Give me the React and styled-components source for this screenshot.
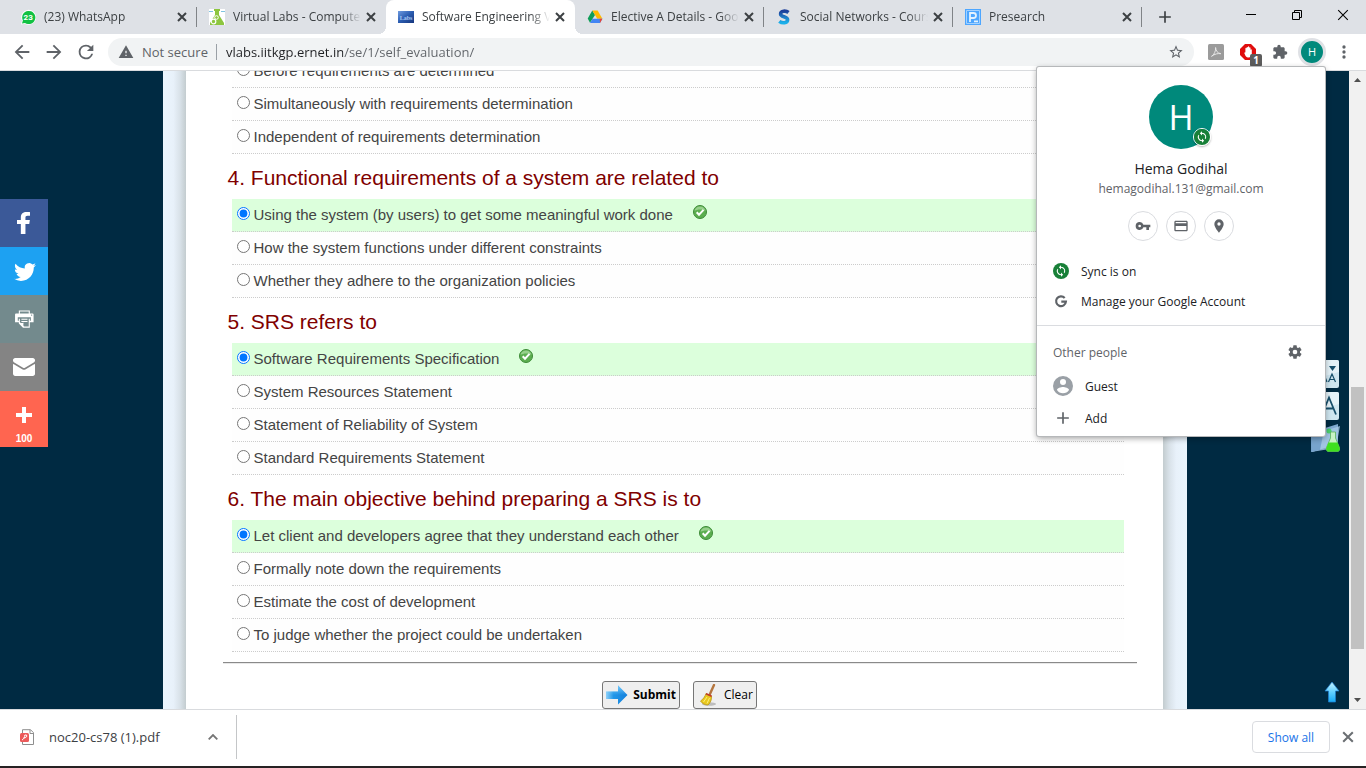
import React from 'react';
import styled, { createGlobalStyle, css } from 'styled-components';

const UI = `"Open Sans", "Noto Sans", sans-serif`;
const ARIAL = `"Liberation Sans", Arial, sans-serif`;

const Global = createGlobalStyle`
  *, *::before, *::after { box-sizing: border-box; }
  html, body { margin: 0; padding: 0; }
  body { font-family: ${UI}; font-size: 12px; color: #3c4043; }
  button { font: inherit; color: inherit; border: 0; padding: 0; background: none; cursor: pointer; }
  a { color: inherit; text-decoration: none; }
  svg { display: block; flex: none; }
  h1, h2, p, ul, fieldset { margin: 0; padding: 0; border: 0; font-weight: normal; }
`;

const Browser = styled.div`
  position: relative;
  display: flex;
  flex-direction: column;
  height: 100vh;
  overflow: hidden;
  background: #fff;
`;

/* ---------- tab strip ---------- */
const TabStrip = styled.header`
  flex: none;
  display: flex;
  height: 34px;
  padding-left: 8px;
  background: #dee1e6;
`;
const Tab = styled.div`
  position: relative;
  display: flex;
  align-items: center;
  flex: 0 1 189px;
  min-width: 0;
  padding: 0 7px 0 12px;
  color: #3c4043;
  ${(p) => p.$divider && css`
    &::after {
      content: '';
      position: absolute;
      right: 0;
      top: 7px;
      width: 1px;
      height: 20px;
      background: #808387;
    }
  `}
  ${(p) => p.$active && css`
    background: #fff;
    border-radius: 8px 8px 0 0;
    &::before, &::after {
      content: '';
      position: absolute;
      bottom: 0;
      width: 8px;
      height: 8px;
    }
    &::before { left: -8px; background: radial-gradient(circle at 0 0, transparent 8px, #fff 8px); }
    &::after { right: -8px; background: radial-gradient(circle at 100% 0, transparent 8px, #fff 8px); }
  `}
`;
const TabTitle = styled.span`
  flex: 1;
  min-width: 0;
  margin: 0 2px 0 8px;
  overflow: hidden;
  white-space: nowrap;
  line-height: 20px;
  mask-image: linear-gradient(to left, transparent 0, #000 20px);
`;
const IconButton = styled.button`
  display: flex;
  align-items: center;
  justify-content: center;
  flex: none;
  width: ${(p) => p.$size || 16}px;
  height: ${(p) => p.$size || 16}px;
  color: ${(p) => p.$color || '#3c4043'};
`;
const NewTab = styled(IconButton)`
  align-self: center;
  margin-left: 15px;
`;
const WindowControls = styled.div`
  display: flex;
  margin-left: auto;
`;
const WindowButton = styled.button`
  display: flex;
  align-items: center;
  justify-content: center;
  width: 46px;
  height: 30px;
  color: #000;
`;

/* ---------- toolbar ---------- */
const Toolbar = styled.div`
  flex: none;
  display: flex;
  align-items: center;
  height: 37px;
  padding: 0 10px 0 10px;
  border-bottom: 1px solid #d9dbde;
  background: #fff;
`;
const NavButtons = styled.nav`
  display: flex;
  gap: 8px;
  margin-right: 10px;
`;
const Omnibox = styled.div`
  flex: 1;
  display: flex;
  align-items: center;
  min-width: 0;
  height: 28px;
  padding: 0 10px;
  border-radius: 14px;
  background: #f1f3f4;
`;
const Security = styled.span`
  display: flex;
  align-items: center;
  gap: 8px;
  padding-right: 8px;
  margin-right: 9px;
  border-right: 1px solid #9aa0a6;
  font-size: 13px;
  line-height: 16px;
  color: #5f6368;
  white-space: nowrap;
`;
/* The host is darker than the path. */
const Address = styled.input`
  flex: 1;
  min-width: 0;
  border: 0;
  padding: 0;
  outline: 0;
  font: 13px/20px ${UI};
  color: transparent;
  caret-color: #202124;
  background: linear-gradient(to right, #202124 117px, #5f6368 117px);
  background-clip: text;
`;
const Extensions = styled.div`
  display: flex;
  align-items: center;
  gap: 8px;
  margin-left: 10px;
`;
const ExtensionSlot = styled.div`
  position: relative;
`;
const Badge = styled.span`
  position: absolute;
  right: -2px;
  bottom: -3px;
  width: 12px;
  height: 13px;
  border-radius: 2px;
  background: #5c5c5c;
  color: #fff;
  font: bold 10px/13px ${UI};
  text-align: center;
`;
const ToolbarAvatar = styled.button`
  width: 28px;
  height: 28px;
  margin: 0 -2px;
  border-radius: 50%;
  border: 3px solid #dfe1e5;
  background: #00897b;
  color: #fff;
  font: 11px/22px ${UI};
`;

/* ---------- viewport ---------- */
const Viewport = styled.div`
  flex: 1;
  min-height: 0;
  display: flex;
  position: relative;
`;
const Page = styled.div`
  position: relative;
  flex: 1;
  min-width: 0;
  overflow: hidden;
  background: #002a42;
  font-family: ${ARIAL};
`;
const Frame = styled.div`
  display: grid;
  grid-template-columns: 23px 1fr 24px;
  max-width: 1024px;
  min-height: 100%;
  margin: 0 auto;
`;
const Edge = styled.div`
  background: linear-gradient(to ${(p) => p.$to}, #ebf5fd 0, #e8f1fa 45%, #d8e1e8 75%, #c3cccf 100%);
`;
const Content = styled.form`
  margin-top: -16px;
  padding: 0 26px 0 37px;
  background: #fff;
`;
const Question = styled.fieldset`
  min-width: 0;
`;
const QuestionTitle = styled.legend`
  padding: 0 0 0 5px;
  width: 100%;
  height: 45px;
  font-size: 21px;
  line-height: 47px;
  color: #800000;
`;
const Choice = styled.label`
  display: flex;
  align-items: center;
  height: 33px;
  margin: 0 13px 0 9px;
  border-bottom: 1px dotted #ccc;
  background: ${(p) => (p.$correct ? '#dcffdc' : '#fefefe')};
  font-size: 15px;
  line-height: 32px;
  color: #444;
`;
const Radio = styled.input`
  flex: none;
  width: 13px;
  height: 13px;
  margin: 0 4px 3px 5px;
`;
const Tick = styled.svg`
  margin: 0 0 6px 20px;
`;
const Rule = styled.hr`
  height: 2px;
  margin: 10px 0 17px;
  border: 0;
  border-top: 1px solid #8a8a8a;
  border-bottom: 1px solid #e8e8e8;
`;
const Actions = styled.div`
  display: flex;
  justify-content: center;
  gap: 13px;
`;
const ActionButton = styled.button`
  display: flex;
  align-items: center;
  gap: 5px;
  height: 28px;
  padding: 0 3px;
  border: 1px solid #767676;
  border-radius: 3px;
  background: #efefef;
  color: #000;
  font: ${(p) => (p.$primary ? 'bold' : 'normal')} 12px/24px ${UI};
`;

const ShareBar = styled.nav`
  position: absolute;
  left: 0;
  top: 128px;
  width: 48px;
`;
const ShareLink = styled.a`
  display: flex;
  flex-direction: column;
  align-items: center;
  padding: 8px 0;
  background: ${(p) => p.$bg};
  color: #fff;
  font: bold 10px/16px ${ARIAL};
  ${(p) => p.$counted && css`padding-bottom: 0;`}
`;
const Tools = styled.div`
  position: absolute;
  right: 10px;
  top: 289px;
  display: flex;
  flex-direction: column;
  gap: 4px;
`;
const ToTop = styled.a`
  position: absolute;
  right: 9px;
  bottom: 6px;
`;

const Scrollbar = styled.div`
  flex: none;
  display: flex;
  flex-direction: column;
  justify-content: space-between;
  align-items: center;
  width: 17px;
  padding: 7px 0;
  background: #f1f1f1;
`;
const Thumb = styled.div`
  width: 13px;
  height: 262px;
  margin-top: 256px;
  background: #c1c1c1;
`;

/* ---------- profile menu ---------- */
const Profile = styled.section`
  position: absolute;
  top: 67px;
  right: 41px;
  width: 288px;
  padding: 18px 0 2px;
  background: #fff;
  border-radius: 2px;
  box-shadow: 0 0 0 1px #b6b8ba, 0 2px 6px rgba(0, 0, 0, 0.4);
  color: #202124;
`;
const Person = styled.div`
  display: flex;
  flex-direction: column;
  align-items: center;
`;
const BigAvatar = styled.div`
  position: relative;
  width: 64px;
  height: 64px;
  border-radius: 50%;
  background: #00897b;
  color: #fff;
  font: 34px/64px ${UI};
  text-align: center;
`;
const SyncBadge = styled.span`
  position: absolute;
  right: 2px;
  bottom: 3px;
  border: 1px solid #fff;
  border-radius: 50%;
  box-shadow: 0 1px 2px rgba(0, 0, 0, 0.3);
`;
const PersonName = styled.h2`
  margin-top: 10px;
  font-size: 14px;
  line-height: 20px;
`;
const PersonMail = styled.p`
  font-size: 12px;
  line-height: 20px;
  color: #5f6368;
`;
const Shortcuts = styled.div`
  display: flex;
  gap: 8px;
  margin: 12px 0 15px;
`;
const Shortcut = styled(IconButton)`
  border: 1px solid #dadce0;
  border-radius: 50%;
`;
const MenuRow = styled.button`
  display: flex;
  align-items: center;
  gap: 12px;
  width: 100%;
  height: ${(p) => p.$height}px;
  padding: 0 16px;
  font-size: 12px;
  text-align: left;
`;
const MenuDivider = styled.hr`
  margin: 9px 0 8px;
  border: 0;
  border-top: 1px solid #dadce0;
`;
const MenuHeading = styled.div`
  display: flex;
  align-items: center;
  justify-content: space-between;
  height: 36px;
  padding: 0 22px 0 16px;
  color: #5f6368;
`;

/* ---------- downloads ---------- */
const Downloads = styled.footer`
  flex: none;
  display: flex;
  align-items: center;
  height: 59px;
  padding: 0 10px 2px 0;
  border-top: 1px solid #d9dbde;
  border-bottom: 2px solid #262223;
  background: #fff;
`;
const DownloadItem = styled.div`
  display: flex;
  align-items: center;
  width: 237px;
  height: 44px;
  padding: 0 15px 0 19px;
  border-right: 1px solid #c4c6c8;
  font-size: 13px;
`;
const DownloadName = styled.a`
  flex: 1;
  margin-left: 14px;
`;
const ShowAll = styled.button`
  margin-left: auto;
  margin-right: 10px;
  width: 78px;
  height: 32px;
  border: 1px solid #dadce0;
  border-radius: 4px;
  color: #1a73e8;
`;

/* ---------- icons ---------- */
const Cross = ({ size = 10, width = 2 }) => (
  <svg width={size} height={size} viewBox="0 0 10 10" stroke="currentColor" strokeWidth={width}>
    <path d="M1 1l8 8M9 1l-8 8" />
  </svg>
);
const Glyph = ({ d, size = 16, color = '#5f6368', view = '0 0 24 24' }) => (
  <svg width={size} height={size} viewBox={view} fill={color}>
    <path d={d} />
  </svg>
);
const P = {
  back: 'M20 11H7.83l5.59-5.59L12 4l-8 8 8 8 1.41-1.41L7.83 13H20v-2z',
  forward: 'M12 4l-1.41 1.41L16.17 11H4v2h12.17l-5.58 5.59L12 20l8-8z',
  reload: 'M17.65 6.35A7.96 7.96 0 0 0 12 4a8 8 0 1 0 7.73 10h-2.08A6 6 0 1 1 12 6c1.66 0 3.14.69 4.22 1.78L13 11h7V4l-2.35 2.35z',
  warning: 'M1 21h22L12 2 1 21zm12-3h-2v-2h2v2zm0-4h-2v-4h2v4z',
  star: 'M22 9.24l-7.19-.62L12 2 9.19 8.63 2 9.24l5.46 4.73L5.82 21 12 17.27 18.18 21l-1.63-7.03L22 9.24zM12 15.4l-3.76 2.27 1-4.28-3.32-2.88 4.38-.38L12 6.1l1.71 4.04 4.38.38-3.32 2.88 1 4.28L12 15.4z',
  puzzle: 'M20.5 11H19V7c0-1.1-.9-2-2-2h-4V3.5a2.500 2.500 0 0 0-5 0V5H4c-1.1 0-1.990.9-1.990 2v3.800H3.500a2.700 2.700 0 0 1 0 5.400H2V20c0 1.100.9 2 2 2h3.800v-1.500a2.700 2.700 0 0 1 5.400 0V22H17c1.100 0 2-.9 2-2v-4h1.500a2.500 2.500 0 0 0 0-5z',
  dots: 'M12 8a2 2 0 1 0 0-4 2 2 0 0 0 0 4zm0 2a2 2 0 1 0 0 4 2 2 0 0 0 0-4zm0 6a2 2 0 1 0 0 4 2 2 0 0 0 0-4z',
  key: 'M12.65 10A5.99 5.99 0 0 0 1 12a5.99 5.99 0 0 0 11.65 2H17v4h4v-4h2v-4H12.65zM7 14a2 2 0 1 1 0-4 2 2 0 0 1 0 4z',
  card: 'M20 4H4c-1.11 0-1.99.89-1.99 2L2 18c0 1.11.89 2 2 2h16c1.11 0 2-.89 2-2V6c0-1.11-.89-2-2-2zm0 14H4v-6h16v6zm0-10H4V6h16v2z',
  pin: 'M12 2a7 7 0 0 0-7 7c0 5.25 7 13 7 13s7-7.75 7-13a7 7 0 0 0-7-7zm0 9.5a2.5 2.5 0 1 1 0-5 2.5 2.5 0 0 1 0 5z',
  gear: 'M19.43 12.98c.04-.32.07-.64.07-.98s-.03-.66-.07-.98l2.11-1.65c.19-.15.24-.42.12-.64l-2-3.46c-.12-.22-.39-.3-.61-.22l-2.49 1c-.52-.4-1.08-.73-1.69-.98l-.38-2.65A.49.49 0 0 0 14 2h-4c-.25 0-.46.18-.49.42l-.38 2.65c-.61.25-1.17.59-1.69.98l-2.49-1c-.23-.09-.49 0-.61.22l-2 3.46c-.13.22-.07.49.12.64l2.11 1.65c-.04.32-.07.65-.07.98s.03.66.07.98l-2.11 1.65c-.19.15-.24.42-.12.64l2 3.46c.12.22.39.3.61.22l2.49-1c.52.4 1.08.73 1.69.98l.38 2.65c.03.24.24.42.49.42h4c.25 0 .46-.18.49-.42l.38-2.65c.61-.25 1.17-.59 1.69-.98l2.49 1c.23.09.49 0 .61-.22l2-3.46c.12-.22.07-.49-.12-.64l-2.11-1.65zM12 15.5a3.5 3.5 0 1 1 0-7 3.5 3.5 0 0 1 0 7z',
  person: 'M12 2a10 10 0 1 0 0 20 10 10 0 0 0 0-20zm0 3a3 3 0 1 1 0 6 3 3 0 0 1 0-6zm0 14.2a7.2 7.2 0 0 1-6-3.22c.03-1.99 4-3.08 6-3.08 1.99 0 5.97 1.09 6 3.08a7.2 7.2 0 0 1-6 3.22z',
  plus: 'M19 13h-6v6h-2v-6H5v-2h6V5h2v6h6v2z',
  sync: 'M12 4V1L8 5l4 4V6a6 6 0 0 1 5.25 8.9l1.46 1.46A8 8 0 0 0 12 4zm0 14a6 6 0 0 1-5.24-8.9L5.3 7.64A8 8 0 0 0 12 20v3l4-4-4-4v3z',
  facebook: 'M22 5.16c-.406-.054-1.806-.16-3.43-.16-3.4 0-5.733 1.825-5.733 5.17v2.882H9v3.913h3.837V27h4.604V16.965h3.823l.587-3.913h-4.41v-2.5c0-1.123.347-1.903 2.198-1.903H22V5.16z',
  twitter: 'M27.996 10.116c-.81.36-1.68.602-2.592.71a4.526 4.526 0 0 0 1.984-2.496 9.037 9.037 0 0 1-2.866 1.095 4.513 4.513 0 0 0-7.69 4.116 12.81 12.81 0 0 1-9.3-4.715 4.49 4.49 0 0 0-.612 2.27 4.51 4.51 0 0 0 2.008 3.755 4.495 4.495 0 0 1-2.044-.564v.057a4.515 4.515 0 0 0 3.62 4.425 4.52 4.52 0 0 1-2.04.077 4.517 4.517 0 0 0 4.217 3.134 9.055 9.055 0 0 1-5.604 1.93A9.18 9.18 0 0 1 6 23.85a12.773 12.773 0 0 0 6.918 2.027c8.3 0 12.84-6.876 12.84-12.84 0-.195-.005-.39-.014-.583a9.172 9.172 0 0 0 2.252-2.336',
  print: 'M24.67 10.62h-2.86V7.49H10.82v3.12H7.95c-.5 0-.9.4-.9.9v7.66h3.77v1.31L15 24.66h6.81v-5.44h3.77v-7.7c-.01-.5-.41-.9-.91-.9zM11.88 8.56h8.86v2.06h-8.86V8.56zm10.98 9.18h-1.05v-2.1h-1.06v7.96H16.4c-1.58 0-.82-3.74-.82-3.74s-3.65.89-3.69-.78v-3.43h-1.06v2.06H9.77v-3.58h13.09v3.61zm.75-4.91c-.4 0-.72-.32-.72-.72 0-.4.32-.72.72-.72.4 0 .72.32.72.72 0 .4-.32.72-.72.72zm-4.12 2.96h-6.1v1.06h6.1v-1.06zm-6.11 3.15h6.1v-1.06h-6.1v1.06z',
  mail: 'M27 22.757c0 1.24-.988 2.243-2.19 2.243H7.19C5.98 25 5 23.994 5 22.757V13.67c0-.556.39-.773.855-.496l8.78 5.238c.782.467 1.95.467 2.73 0l8.78-5.238c.472-.28.855-.063.855.495v9.087z M27 9.243C27 8.006 26.02 7 24.81 7H7.19C5.988 7 5 8.004 5 9.243v.465c0 .554.385 1.232.857 1.514l9.61 5.733c.267.16.8.16 1.067 0l9.61-5.733c.473-.283.856-.96.856-1.514v-.465z',
  more: 'M18 14V8h-4v6H8v4h6v6h4v-6h6v-4h-6z',
};

const SyncDot = ({ size }) => (
  <svg width={size} height={size} viewBox="0 0 24 24">
    <circle cx="12" cy="12" r="12" fill="#188038" />
    <path d={P.sync} fill="#fff" transform="translate(2.4 2.4) scale(.8)" />
  </svg>
);
const GoogleG = () => (
  <svg width="16" height="16" viewBox="0 0 16 16" fill="none" stroke="#5f6368" strokeWidth="2.200">
    <path d="M11.700 5A4.900 4.900 0 1 0 12.900 8.700H8.300" />
  </svg>
);
const WhatsAppIcon = () => (
  <svg width="16" height="16" viewBox="0 0 16 16">
    <path d="M1 15.5l1-4A7.4 7.4 0 1 1 5 14.700z" fill="#fff" />
    <path d="M2 14.500l.9-3A6.600 6.600 0 1 1 5 13.900z" fill="#12c143" />
    <text x="8.2" y="10.700" fill="#fff" fontSize="8" fontWeight="bold" fontFamily="Roboto, sans-serif" textAnchor="middle">23</text>
  </svg>
);
const FlaskIcon = () => (
  <svg width="16" height="16" viewBox="0 0 16 16">
    <rect width="16" height="16" fill="#fff" />
    <path d="M0 2.500h4M12 2.500h4" stroke="#7fc4e0" />
    <path d="M5 0h6v2h-1v4l5 8v2H1v-2l5-8V2H5z" fill="#8dc63f" />
    <circle cx="7.500" cy="8.500" r="1.800" fill="none" stroke="#fff" />
    <circle cx="4.500" cy="12.500" r="2.300" fill="none" stroke="#fff" strokeWidth="1.200" />
  </svg>
);
const LabsIcon = () => (
  <svg width="16" height="16" viewBox="0 0 16 16">
    <defs>
      <linearGradient id="labs" x1="0" y1="0" x2="1" y2="1">
        <stop offset="0" stopColor="#6f9be0" />
        <stop offset=".5" stopColor="#2a5cb0" />
        <stop offset="1" stopColor="#16357c" />
      </linearGradient>
    </defs>
    <rect y="2" width="16" height="12" fill="url(#labs)" />
    <text x="8" y="10.500" fill="#a9c8f5" fontSize="6" fontWeight="bold" fontFamily="Liberation Serif, serif" textAnchor="middle">Labs</text>
  </svg>
);
const DriveIcon = () => (
  <svg width="16" height="16" viewBox="0 0 16 16">
    <path d="M5.300 1.500L.7 9.500l2.300 4.300L8 5.900z" fill="#0f9d58" />
    <path d="M5.300 1.500h5.300l4.800 8.200h-5.100z" fill="#ffba00" />
    <path d="M5.500 9.700h9.900l-2.400 4.300H3z" fill="#4285f4" />
    <path d="M12.700 9.700h2.700L13 14z" fill="#ea4335" />
  </svg>
);
const SIcon = () => (
  <svg width="16" height="16" viewBox="0 0 16 16" fill="none" strokeWidth="3.600">
    <defs>
      <linearGradient id="swim" x1="0" y1="0" x2="0" y2="1">
        <stop offset="0" stopColor="#1d3f9b" />
        <stop offset=".55" stopColor="#1f7fc8" />
        <stop offset="1" stopColor="#1ab0ea" />
      </linearGradient>
    </defs>
    <path d="M12.500 3.500C10 1.500 4.600 1.600 4.600 4.900c0 3.400 7 2.200 7 5.900 0 3.600-5.400 3.800-8.300 1.500" stroke="url(#swim)" />
  </svg>
);
const PresearchIcon = () => (
  <svg width="16" height="16" viewBox="0 0 16 16" fill="none">
    <rect width="16" height="16" fill="#4da6ff" />
    <path d="M1.500 14.500v-13h13v13z" stroke="#a5d2ff" />
    <path d="M5 13V4h3.500a2.500 2.500 0 0 1 0 5H5M9 12.300h4" stroke="#e4f2ff" strokeWidth="1.800" />
  </svg>
);
const AcrobatIcon = () => (
  <svg width="16" height="16" viewBox="0 0 16 16" fill="none">
    <rect width="16" height="16" rx="1.500" fill="#9b9b9b" />
    <path d="M3.500 12.300C6 11 8 7 7.600 3.500c.2 3.500 2 5.600 5.200 6.200-3-.4-6 .2-9.300 2.600z" stroke="#e8e8e8" />
  </svg>
);
const BlockIcon = () => (
  <svg width="16" height="16" viewBox="0 0 16 16">
    <path d="M5 0h6l5 5v6l-5 5H5l-5-5V5z" fill="#e00d0d" />
    <path d="M4.200 8.700l1.200-.5V4.500c0-.9 1.200-.9 1.200 0V3.600c0-.9 1.300-.9 1.300 0V3c0-.9 1.300-.9 1.300 0v1c0-.9 1.300-.9 1.300 0v2c0-.9 1.300-.9 1.300 0v4c0 2.200-1.300 3.500-3.300 3.500S5.500 12.400 4.200 8.700z" fill="#fff" />
  </svg>
);
const TickIcon = () => (
  <Tick width="14" height="14" viewBox="0 0 14 14" role="img" aria-label="Correct">
    <circle cx="7" cy="7" r="6.500" fill="#5cae50" stroke="#3d8b37" />
    <path d="M1.500 6a5.600 5.600 0 0 1 11 0c-3-2-8-2-11 0z" fill="#96d08b" />
    <path d="M3.700 7.200l2.300 2.500 4.500-4.800" fill="none" stroke="#fff" strokeWidth="2" />
  </Tick>
);
const ArrowIcon = () => (
  <svg width="22" height="22" viewBox="0 0 22 22">
    <defs>
      <linearGradient id="go" x1="0" y1="0" x2="1" y2="0">
        <stop offset="0" stopColor="#8fd0f8" />
        <stop offset=".35" stopColor="#2196e8" />
        <stop offset="1" stopColor="#1580dc" />
      </linearGradient>
      <linearGradient id="shine" x1="0" y1="0" x2="0" y2="1">
        <stop offset="0" stopColor="#7fd2ff" stopOpacity=".9" />
        <stop offset="1" stopColor="#7fd2ff" stopOpacity="0" />
      </linearGradient>
    </defs>
    <path d="M0 7.500h12V1.500l9.500 9.500-9.500 9.500v-5.500H0z" fill="url(#go)" />
    <path d="M0 7.500h12V1.500l9.500 9.500H0z" fill="url(#shine)" />
  </svg>
);
const BroomIcon = () => (
  <svg width="22" height="22" viewBox="-1 0 22 22">
    <ellipse cx="11" cy="20" rx="7" ry="1.700" fill="#bdbdbd" />
    <path d="M16 1l-4.500 10" stroke="#b5763f" strokeWidth="2.400" strokeLinecap="round" />
    <path d="M8 9.500l5.500 2.500c.5 3-1 7-3.500 9-3 0-6-1.500-7.500-4C5 15.500 7 12.500 8 9.500z" fill="#e9c81e" stroke="#b28f12" strokeWidth=".7" />
    <path d="M9 13l-3.500 5M11.500 14L9 19.500" stroke="#fbee7a" />
    <path d="M8 9.800l5.600 2.500" stroke="#c0392b" strokeWidth="1.600" />
  </svg>
);
const FontSizeIcon = ({ large }) => (
  <svg width="28" height="28" viewBox="0 0 28 28" fill="none" stroke="#174f6b">
    <rect width="28" height="28" rx="2" fill="#cfe6f0" stroke="none" />
    <path d="M0 2a2 2 0 0 1 2-2h24a2 2 0 0 1 2 2v10L0 20z" fill="#e4f2f8" stroke="none" />
    {large ? (
      <path d="M11 22.500l7-17 7 17M13.500 16.500h9" strokeWidth="1.800" />
    ) : (
      <>
        <path d="M9 22l3.500-9 3.500 9M10.500 19h4.500M17.500 22l3.500-8 3.500 8M18.500 19.500h5" strokeWidth="1.200" />
        <path d="M18 6h7l-3.500 5z" fill="#174f6b" stroke="none" />
      </>
    )}
  </svg>
);
const FolderIcon = () => (
  <svg width="30" height="31" viewBox="0 0 30 31">
    <path d="M1 8l12-4 2 1 13-4v20L2 29z" fill="#7fa9cf" />
    <path d="M1 12l26-8 3-1-4 22L1 29z" fill="#a9cbe6" opacity=".8" />
    <path d="M1 12v17l9-2L14 7z" fill="#6d9cc8" opacity=".8" />
    <circle cx="19" cy="8" r="2.500" fill="#35d24f" opacity=".8" />
    <path d="M20.500 9h5v6l4 9.500c.8 2.500-.5 4-2.500 4h-8c-2 0-3.300-1.500-2.500-4l4-9.500z" fill="#c9f3c5" stroke="#4fae4a" strokeWidth=".7" />
    <path d="M18.500 19.500h9l2 5c.8 2.500-.5 4-2.500 4h-8c-2 0-3.300-1.500-2.500-4z" fill="#3fe01f" />
  </svg>
);
const UpIcon = () => (
  <svg width="16" height="22" viewBox="0 0 16 22">
    <defs>
      <linearGradient id="up" x1="0" y1="0" x2="0" y2="1">
        <stop offset="0" stopColor="#c8f3ff" />
        <stop offset=".5" stopColor="#63d0ff" />
        <stop offset="1" stopColor="#16a9f5" />
      </linearGradient>
    </defs>
    <path d="M8 1l7 9h-3.500v11h-7V10H1z" fill="url(#up)" stroke="#1f7fd0" strokeWidth=".7" />
  </svg>
);
const PdfIcon = () => (
  <svg width="16" height="17" viewBox="0 0 16 17" fill="none">
    <path d="M3.500 4V.700h8l3 3v11.800h-11V13" stroke="#8e8e8e" />
    <path d="M11 .700V4.500h3.500" stroke="#8e8e8e" />
    <rect x="1" y="4" width="9" height="9" rx="1.500" fill="#ec5a5a" />
    <path d="M3 11c1.500-.5 3-3 2.800-5h1.700c1 1.500-.5 3-3 3" stroke="#fff" />
  </svg>
);

const tabs = [
  { title: '(23) WhatsApp', icon: <WhatsAppIcon />, divider: true },
  { title: 'Virtual Labs - Computer', icon: <FlaskIcon /> },
  { title: 'Software Engineering V', icon: <LabsIcon />, active: true },
  { title: 'Elective A Details - Goo', icon: <DriveIcon />, divider: true },
  { title: 'Social Networks - Cours', icon: <SIcon />, divider: true },
  { title: 'Presearch', icon: <PresearchIcon />, divider: true },
];

const questions = [
  {
    id: 'q3',
    options: ['Before requirements are determined', 'Simultaneously with requirements determination', 'Independent of requirements determination'],
  },
  {
    id: 'q4',
    title: '4. Functional requirements of a system are related to',
    answer: 0,
    options: ['Using the system (by users) to get some meaningful work done', 'How the system functions under different constraints', 'Whether they adhere to the organization policies'],
  },
  {
    id: 'q5',
    title: '5. SRS refers to',
    answer: 0,
    options: ['Software Requirements Specification', 'System Resources Statement', 'Statement of Reliability of System', 'Standard Requirements Statement'],
  },
  {
    id: 'q6',
    title: '6. The main objective behind preparing a SRS is to',
    answer: 0,
    options: ['Let client and developers agree that they understand each other', 'Formally note down the requirements', 'Estimate the cost of development', 'To judge whether the project could be undertaken'],
  },
];

const shares = [
  { name: 'Facebook', bg: '#3b5998', d: P.facebook },
  { name: 'Twitter', bg: '#1da1f2', d: P.twitter },
  { name: 'Print', bg: '#738a8d', d: P.print },
  { name: 'Email', bg: '#848484', d: P.mail },
  { name: 'More', bg: '#ff6550', d: P.more, count: '100' },
];

export default function App() {
  return (
    <Browser>
      <Global />
      <TabStrip>
        {tabs.map((t) => (
          <Tab key={t.title} $active={t.active} $divider={t.divider}>
            {t.icon}
            <TabTitle>{t.title}</TabTitle>
            <IconButton aria-label="Close tab"><Cross /></IconButton>
          </Tab>
        ))}
        <NewTab aria-label="New tab"><Glyph d={P.plus} size={20} color="#3c4043" /></NewTab>
        <WindowControls>
          <WindowButton aria-label="Minimize">
            <svg width="10" height="10" viewBox="0 0 10 10" stroke="#000"><path d="M0 4.500h10" /></svg>
          </WindowButton>
          <WindowButton aria-label="Restore">
            <svg width="10" height="10" viewBox="0 0 10 10" stroke="#000" fill="none"><path d="M.5 2.500h7v7h-7zM2.500 2.500v-2h7v7h-2" /></svg>
          </WindowButton>
          <WindowButton aria-label="Close window"><Cross size={12} width={0.9} /></WindowButton>
        </WindowControls>
      </TabStrip>

      <Toolbar>
        <NavButtons>
          <IconButton $size={24} aria-label="Back"><Glyph d={P.back} size={22} /></IconButton>
          <IconButton $size={24} aria-label="Forward"><Glyph d={P.forward} size={22} /></IconButton>
          <IconButton $size={24} aria-label="Reload"><Glyph d={P.reload} size={22} /></IconButton>
        </NavButtons>
        <Omnibox>
          <Security><Glyph d={P.warning} />Not secure</Security>
          <Address aria-label="Address" defaultValue="vlabs.iitkgp.ernet.in/se/1/self_evaluation/" />
          <IconButton aria-label="Bookmark"><Glyph d={P.star} /></IconButton>
        </Omnibox>
        <Extensions>
          <IconButton $size={24} aria-label="Acrobat"><AcrobatIcon /></IconButton>
          <ExtensionSlot>
            <IconButton $size={24} aria-label="Ad blocker"><BlockIcon /></IconButton>
            <Badge>1</Badge>
          </ExtensionSlot>
          <IconButton $size={24} aria-label="Extensions"><Glyph d={P.puzzle} /></IconButton>
          <ToolbarAvatar aria-label="Profile">H</ToolbarAvatar>
          <IconButton $size={24} aria-label="Menu"><Glyph d={P.dots} size={20} /></IconButton>
        </Extensions>
      </Toolbar>

      <Viewport>
        <Page>
          <Frame>
            <Edge $to="right" />
            <Content onSubmit={(e) => e.preventDefault()}>
              {questions.map((q) => (
                <Question key={q.id}>
                  {q.title && <QuestionTitle>{q.title}</QuestionTitle>}
                  {q.options.map((o, i) => (
                    <Choice key={o} $correct={q.answer === i}>
                      <Radio type="radio" name={q.id} defaultChecked={q.answer === i} />
                      {o}
                      {q.answer === i && <TickIcon />}
                    </Choice>
                  ))}
                </Question>
              ))}
              <Rule />
              <Actions>
                <ActionButton $primary type="submit"><ArrowIcon />Submit</ActionButton>
                <ActionButton type="reset"><BroomIcon />Clear</ActionButton>
              </Actions>
            </Content>
            <Edge $to="left" />
          </Frame>
          <ShareBar>
            {shares.map((s) => (
              <ShareLink key={s.name} href="#" aria-label={s.name} $bg={s.bg} $counted={!!s.count}>
                <Glyph d={s.d} size={32} view="0 0 32 32" color="#fff" />
                {s.count}
              </ShareLink>
            ))}
          </ShareBar>
          <Tools>
            <IconButton $size={28} aria-label="Smaller text"><FontSizeIcon /></IconButton>
            <IconButton $size={28} aria-label="Larger text"><FontSizeIcon large /></IconButton>
            <IconButton $size={28} aria-label="Experiments"><FolderIcon /></IconButton>
          </Tools>
          <ToTop href="#" aria-label="Back to top"><UpIcon /></ToTop>
        </Page>
        <Scrollbar>
          <svg width="7" height="4" viewBox="0 0 7 4"><path d="M0 4l3.500-4L7 4z" fill="#505050" /></svg>
          <Thumb />
          <svg width="7" height="4" viewBox="0 0 7 4"><path d="M0 0l3.500 4L7 0z" fill="#505050" /></svg>
        </Scrollbar>
      </Viewport>

      <Downloads>
        <DownloadItem>
          <PdfIcon />
          <DownloadName href="#">noc20-cs78 (1).pdf</DownloadName>
          <IconButton aria-label="Download options">
            <svg width="10" height="6" viewBox="0 0 10 6" fill="none" stroke="#757575" strokeWidth="1.800"><path d="M.7 5.300L5 1l4.300 4.300" /></svg>
          </IconButton>
        </DownloadItem>
        <ShowAll>Show all</ShowAll>
        <IconButton aria-label="Close downloads" $color="#6b6f73"><Cross size={12} width={1.7} /></IconButton>
      </Downloads>

      <Profile aria-label="Profile menu">
        <Person>
          <BigAvatar>
            H
            <SyncBadge><SyncDot size={16} /></SyncBadge>
          </BigAvatar>
          <PersonName>Hema Godihal</PersonName>
          <PersonMail>hemagodihal.131@gmail.com</PersonMail>
          <Shortcuts>
            <Shortcut $size={30} aria-label="Passwords"><Glyph d={P.key} /></Shortcut>
            <Shortcut $size={30} aria-label="Payment methods"><Glyph d={P.card} /></Shortcut>
            <Shortcut $size={30} aria-label="Addresses"><Glyph d={P.pin} /></Shortcut>
          </Shortcuts>
        </Person>
        <MenuRow $height={30}><SyncDot size={16} />Sync is on</MenuRow>
        <MenuRow $height={30}><GoogleG />Manage your Google Account</MenuRow>
        <MenuDivider />
        <MenuHeading>
          Other people
          <IconButton aria-label="Manage people"><Glyph d={P.gear} /></IconButton>
        </MenuHeading>
        <MenuRow $height={32}><Glyph d={P.person} size={20} color="#9aa0a6" view="2 2 20 20" />Guest</MenuRow>
        <MenuRow $height={32}><Glyph d={P.plus} size={20} />Add</MenuRow>
      </Profile>
    </Browser>
  );
}
